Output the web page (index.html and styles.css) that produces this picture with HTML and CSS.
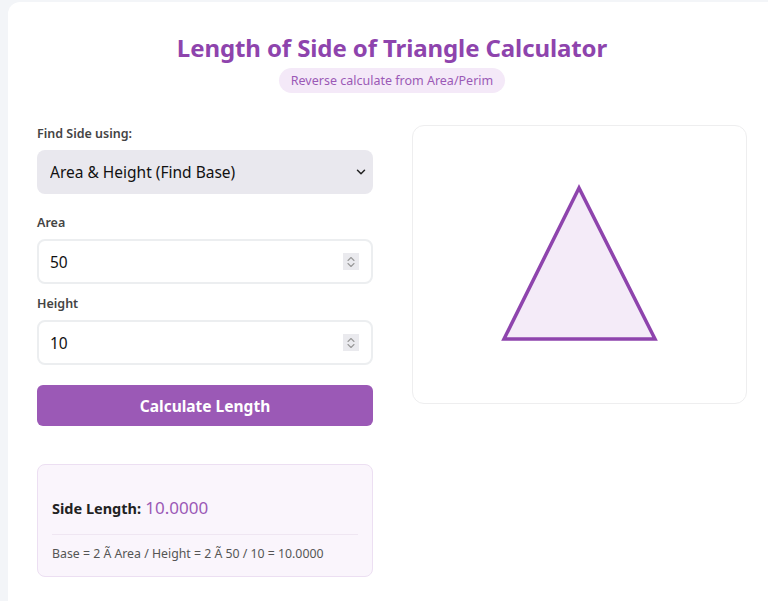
FILE: index.html
```html
<!DOCTYPE html>
<html lang="en">
<head>
<meta charset="utf-8">
<title>Length of Side of Triangle Calculator</title>
<link rel="stylesheet" href="styles.css">
</head>
<body>
<div class="card">
  <header class="head">
    <h1 class="title">Length of Side of Triangle Calculator</h1>
    <span class="badge">Reverse calculate from Area/Perim</span>
  </header>
  <div class="cols">
    <div class="form">
      <div class="group group-select">
        <label class="label">Find Side using:</label>
        <div class="select-wrap">
          <select class="select">
            <option>Area &amp; Height (Find Base)</option>
          </select>
          <svg class="chev" width="10" height="6" viewBox="0 0 10 6"><path d="M1.5 1.2l3.5 3.5 3.5-3.5" fill="none" stroke="#222" stroke-width="1.5" stroke-linecap="round" stroke-linejoin="round"/></svg>
        </div>
      </div>
      <div class="group">
        <label class="label">Area</label>
        <div class="input-wrap">
          <input class="input" type="text" value="50">
          <span class="spin"><svg width="12" height="16" viewBox="0 0 12 16"><path d="M3 6.5L6 3.5l3 3M3 9.5L6 12.5l3-3" fill="none" stroke="#999" stroke-width="1.1" stroke-linecap="round" stroke-linejoin="round"/></svg></span>
        </div>
      </div>
      <div class="group">
        <label class="label">Height</label>
        <div class="input-wrap">
          <input class="input" type="text" value="10">
          <span class="spin"><svg width="12" height="16" viewBox="0 0 12 16"><path d="M3 6.5L6 3.5l3 3M3 9.5L6 12.5l3-3" fill="none" stroke="#999" stroke-width="1.1" stroke-linecap="round" stroke-linejoin="round"/></svg></span>
        </div>
      </div>
      <button class="btn">Calculate Length</button>
      <div class="result">
        <div class="res-line"><strong class="res-label">Side Length:</strong> <span class="res-value">10.0000</span></div>
        <div class="res-formula">Base = 2 Ã Area / Height = 2 Ã 50 / 10 = 10.0000</div>
      </div>
    </div>
    <div class="viz">
      <svg class="tri" width="333" height="277" viewBox="0 0 333 277">
        <polygon points="166,62 91,213 242,213" fill="#f4ebf8" stroke="#8e44ad" stroke-width="3.5" stroke-linejoin="miter"/>
      </svg>
    </div>
  </div>
</div>
</body>
</html>
```
FILE: styles.css
```css
* { box-sizing: border-box; }
html, body { margin: 0; padding: 0; }
body {
  background: #f3f5f8;
  font-family: "Noto Sans", "Open Sans", sans-serif;
  color: #333;
  overflow: hidden;
  height: 601px;
}
.card {
  margin: 2px 0 0 8px;
  width: 780px;
  height: 599px;
  background: #fff;
  border-radius: 12px 12px 0 0;
  padding: 30px 41px 0 29px;
}
.head {
  display: flex;
  flex-direction: column;
  align-items: center;
  margin-bottom: 32px;
}
.title {
  margin: 0;
  font-size: 24px;
  font-weight: 700;
  color: #8e44ad;
  line-height: 32px;
  letter-spacing: -0.1px;
}
.badge {
  margin-top: 4px;
  background: #f4e9f8;
  color: #9b59b6;
  font-size: 12.5px;
  line-height: 25px;
  padding: 0 12px;
  border-radius: 13px;
}
.cols {
  display: grid;
  grid-template-columns: 336px 335px;
  column-gap: 39px;
  align-items: start;
}
.group { margin-bottom: 11px; }
.group-select { margin-bottom: 20px; }
.label {
  display: block;
  font-size: 12.5px;
  font-weight: 600;
  color: #444;
  line-height: 18px;
  margin-bottom: 7px;
}
.select-wrap, .input-wrap { position: relative; }
.select {
  display: block;
  width: 100%;
  height: 44px;
  appearance: none;
  -webkit-appearance: none;
  border: none;
  background: #e9e8ee;
  border-radius: 8px;
  padding: 0 13px;
  font-family: "Noto Sans", sans-serif;
  font-size: 15.5px;
  color: #111;
}
.chev {
  position: absolute;
  right: 7px;
  top: 19px;
}
.input {
  display: block;
  width: 100%;
  height: 45px;
  border: 2px solid #eceef0;
  border-radius: 8px;
  padding: 0 11px;
  font-family: "Noto Sans", sans-serif;
  font-size: 15.5px;
  color: #111;
  background: #fff;
}
.spin {
  position: absolute;
  right: 14px;
  top: 14px;
  width: 16px;
  height: 17px;
  background: #eaeaee;
  display: flex;
  align-items: center;
  justify-content: center;
}
.btn {
  display: block;
  width: 100%;
  height: 41px;
  margin-top: 20px;
  border: none;
  border-radius: 6px;
  background: #9b59b6;
  color: #fff;
  font-family: "Noto Sans", sans-serif;
  font-size: 15.5px;
  font-weight: 700;
}
.result {
  margin-top: 38px;
  background: #faf5fc;
  border: 1px solid #ecdff2;
  border-radius: 8px;
  padding: 30px 14px 13px;
}
.res-line {
  line-height: 26px;
  padding-bottom: 13px;
  border-bottom: 1px solid #efe6f2;
}
.res-label { font-size: 14.5px; font-weight: 700; color: #222; }
.res-value { font-size: 17px; color: #9b59b6; }
.res-formula {
  margin-top: 10px;
  font-size: 12.3px;
  color: #555;
  line-height: 18px;
}
.viz {
  border: 1px solid #eeeeef;
  border-radius: 12px;
  height: 279px;
}
.tri { display: block; }
```
